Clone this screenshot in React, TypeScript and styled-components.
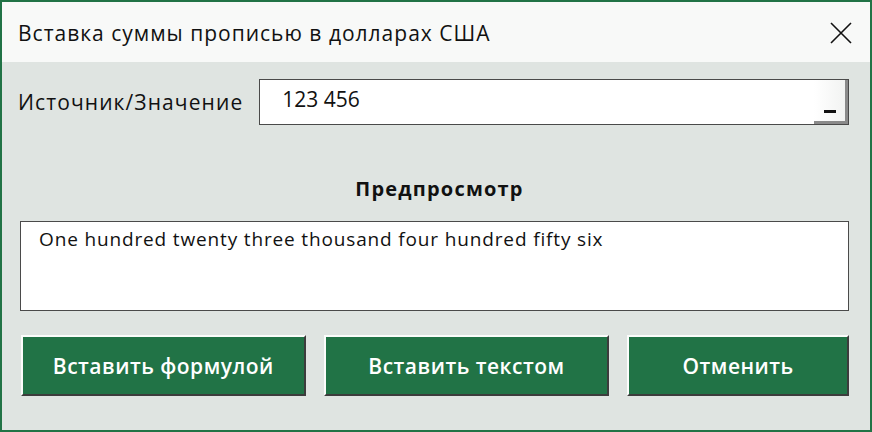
import React from "react";
import styled, { createGlobalStyle } from "styled-components";

const GlobalStyle = createGlobalStyle`
  html, body {
    margin: 0;
    padding: 0;
    background: #dfe4e1;
  }
  * { box-sizing: border-box; }
`;

const Window = styled.div`
  width: 872px;
  height: 432px;
  display: flex;
  flex-direction: column;
  border: 2px solid #217346;
  font-family: "Open Sans", "Noto Sans", sans-serif;
  color: #111;
  overflow: hidden;
`;

const TitleBar = styled.div`
  height: 60px;
  display: flex;
  align-items: center;
  justify-content: space-between;
  padding: 2px 16px 0 16px;
  background: #f8f9f8;
`;

const Title = styled.div`
  font-size: 21px;
  letter-spacing: 1px;
`;

const CloseButton = styled.button`
  width: 26px;
  height: 26px;
  padding: 0;
  border: none;
  background: transparent;
  display: flex;
  align-items: center;
  justify-content: center;
`;

const Body = styled.div`
  flex: 1;
  display: flex;
  flex-direction: column;
  background: #dfe4e1;
  padding: 17px 21px 0 16px;
`;

const SourceRow = styled.div`
  display: flex;
  align-items: center;
  gap: 16px;
`;

const Label = styled.label`
  font-size: 21px;
  letter-spacing: 1.1px;
  white-space: nowrap;
`;

const InputBox = styled.div`
  flex: 1;
  height: 46px;
  display: flex;
  align-items: center;
  justify-content: space-between;
  background: #fff;
  border: 1px solid #4a4a4a;
  padding-left: 22px;
`;

const InputValue = styled.span`
  font-size: 21px;
  margin-top: -7px;
`;

const PickButton = styled.div`
  align-self: stretch;
  width: 34px;
  display: flex;
  align-items: flex-end;
  justify-content: center;
  padding-bottom: 8px;
  background: linear-gradient(90deg, #fff, #f2f3f2);
  border-right: 3px solid #8a8a8a;
  border-bottom: 3px solid #8a8a8a;
`;

const Dash = styled.span`
  width: 12px;
  height: 3px;
  background: #111;
`;

const PreviewTitle = styled.div`
  margin-top: 50px;
  text-align: center;
  font-size: 20px;
  font-weight: 700;
  letter-spacing: 1.2px;
  padding-left: 12px;
`;

const PreviewBox = styled.div`
  margin-top: 19px;
  margin-left: 2px;
  height: 90px;
  background: #fff;
  border: 1px solid #4a4a4a;
  padding: 4px 18px;
  font-size: 19px;
  letter-spacing: 0.85px;
`;

const ButtonRow = styled.div`
  margin-top: 24px;
  display: flex;
  gap: 18px;
  padding-left: 3px;
`;

const ActionButton = styled.button<{ $width: number }>`
  width: ${(p) => p.$width}px;
  height: 61px;
  background: #217346;
  color: #fff;
  font-family: "Open Sans", "Noto Sans", sans-serif;
  font-size: 21px;
  font-weight: 600;
  letter-spacing: 0.5px;
  border-top: 2px solid #fbfcfb;
  border-left: 2px solid #fbfcfb;
  border-right: 2px solid #3c3c3c;
  border-bottom: 2px solid #3c3c3c;
  padding: 0;
`;

export default function App() {
  return (
    <>
      <GlobalStyle />
      <Window>
        <TitleBar>
          <Title>Вставка суммы прописью в долларах США</Title>
          <CloseButton aria-label="close">
            <svg width="22" height="22" viewBox="0 0 22 22">
              <path d="M1 1 L21 21 M21 1 L1 21" stroke="#111" strokeWidth="1.6" />
            </svg>
          </CloseButton>
        </TitleBar>
        <Body>
          <SourceRow>
            <Label>Источник/Значение</Label>
            <InputBox>
              <InputValue>123 456</InputValue>
              <PickButton>
                <Dash />
              </PickButton>
            </InputBox>
          </SourceRow>
          <PreviewTitle>Предпросмотр</PreviewTitle>
          <PreviewBox>One hundred twenty three thousand four hundred fifty six</PreviewBox>
          <ButtonRow>
            <ActionButton $width={285}>Вставить формулой</ActionButton>
            <ActionButton $width={286}>Вставить текстом</ActionButton>
            <ActionButton $width={222}>Отменить</ActionButton>
          </ButtonRow>
        </Body>
      </Window>
    </>
  );
}
